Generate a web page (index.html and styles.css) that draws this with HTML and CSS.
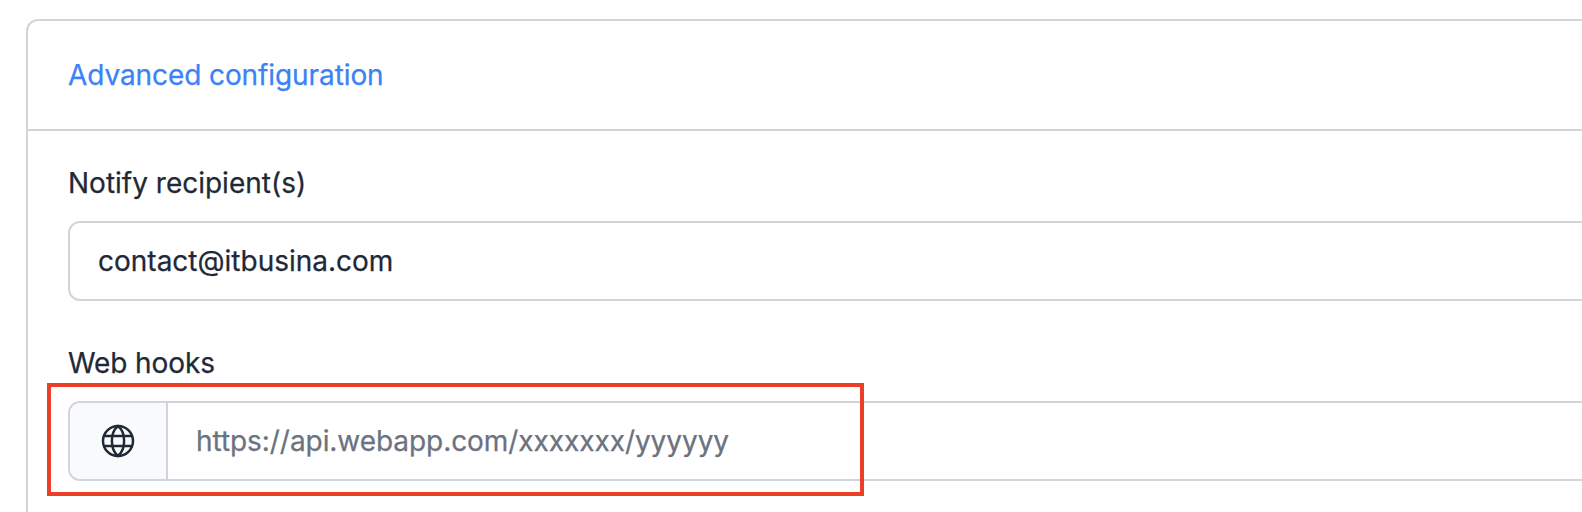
FILE: index.html
```
<!DOCTYPE html>
<html lang="en">
<head>
<meta charset="utf-8">
<title>Advanced configuration</title>
<link rel="stylesheet" href="styles.css">
</head>
<body>
<section class="card">
  <header class="card-header"><a class="card-title">Advanced configuration</a></header>
  <div class="card-body">
    <div class="field">
      <label class="label">Notify recipient(s)</label>
      <div class="control"><span class="value">contact@itbusina.com</span></div>
    </div>
    <div class="field">
      <label class="label label-tight">Web hooks</label>
      <div class="control">
        <span class="addon">
          <svg class="globe" viewBox="0 0 34 34" fill="none" stroke="currentColor" stroke-width="2.5">
            <circle cx="17" cy="17" r="15"/>
            <path d="M17 2C13 5.200 10.900 10.500 10.900 17S13 28.800 17 32C21 28.800 23.100 23.500 23.100 17S21 5.200 17 2Z"/>
            <path d="M2.600 12H31.400M2.600 22H31.400"/>
          </svg>
        </span>
        <span class="value placeholder">https://api.webapp.com/xxxxxxx/yyyyyy</span>
      </div>
    </div>
  </div>
</section>
<div class="highlight"></div>
</body>
</html>
```
FILE: styles.css
```
* { box-sizing: border-box; }
html { overflow: hidden; }
body {
  margin: 0;
  height: 512px;
  padding: 19px 0 0 26px;
  overflow: hidden;
  position: relative;
  background: #fff;
  color: #1f2937;
  font: 400 28px/42px Inter, sans-serif;
  -webkit-text-stroke: 0.25px currentColor;
}
.card {
  width: 1600px;
  height: 493px;
  border: 2px solid #d1d5db;
  border-bottom: 0;
  border-radius: 12px 0 0 0;
}
.card-header {
  height: 110px;
  padding: 33px 40px;
  border-bottom: 2px solid #d1d5db;
}
.card-title { display: block; color: #3b82f6; letter-spacing: -0.09px; }
.card-body {
  display: flex;
  flex-direction: column;
  gap: 41px;
  padding: 31px 0 0 40px;
}
.field { display: flex; flex-direction: column; gap: 17px; }
.label { display: block; }
.label-tight { letter-spacing: -0.1px; }
.control {
  display: flex;
  align-items: stretch;
  height: 80px;
  border: 2px solid #d1d5db;
  border-radius: 12px;
  overflow: hidden;
}
.value { padding: 17px 28px; }
.placeholder { color: #6b7280; letter-spacing: -0.06px; }
.addon {
  display: flex;
  align-items: center;
  justify-content: center;
  width: 98px;
  background: #f9fafb;
  border-right: 2px solid #d1d5db;
}
.globe { width: 34px; height: 34px; }
.highlight {
  position: absolute;
  left: 47px;
  top: 383px;
  width: 817px;
  height: 113px;
  border: 4px solid #eb4025;
}
```
